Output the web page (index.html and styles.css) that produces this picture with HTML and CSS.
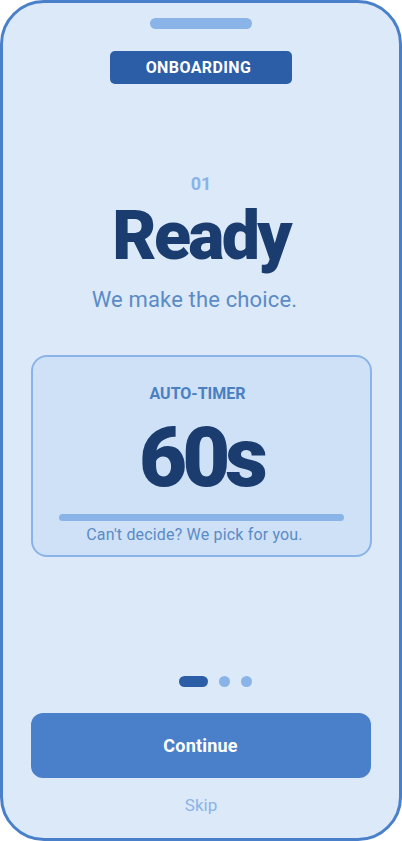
FILE: index.html
```
<!DOCTYPE html>
<html lang="en">

<head>
    <meta charset="UTF-8">
    <meta name="viewport" content="width=device-width, initial-scale=1.0">

    <title>Onboarding</title>
    <link rel="stylesheet" href="styles.css">
</head>

<body>
    <div class="phone">
        <div class="notch"></div>
        <div class="badge">ONBOARDING</div>

        <div class="step">01</div>
        <h1 class="title">Ready</h1>
        <p class="subtitle">We make the choice.</p>

        <div class="card">
            <div class="card-label">AUTO-TIMER</div>
            <div class="timer">60s</div>
            <div class="bar"></div>
            <div class="card-note">Can't decide? We pick for you.</div>
        </div>

        <div class="bottom">
            <div class="dots">
                <span class="dot active"></span>
                <span class="dot"></span>
                <span class="dot"></span>
            </div>
            <button class="btn">Continue</button>
            <div class="skip">Skip</div>
        </div>
    </div>
</body>

</html>
```

FILE: styles.css
```
* {
    box-sizing: border-box;
}

body {
    margin: 0;
    background: #ffffff;
    font-family: Roboto, "Liberation Sans", sans-serif;
}

.phone {
    width: 402px;
    height: 841px;
    border: 3px solid #4a7fc9;
    border-radius: 44px;
    background: #dce9f8;
    display: flex;
    flex-direction: column;
    align-items: center;
    padding-top: 15px;
    text-align: center;
}

.notch {
    width: 102px;
    height: 11px;
    border-radius: 6px;
    background: #8ab4e8;
}

.badge {
    margin-top: 22px;
    width: 182px;
    height: 33px;
    border-radius: 5px;
    background: #2c5ea8;
    color: #ffffff;
    font-size: 16px;
    font-weight: 700;
    letter-spacing: 0.4px;
    line-height: 33px;
    padding-right: 5px;
}

.step {
    margin-top: 90px;
    font-size: 18px;
    line-height: 20px;
    font-weight: 700;
    color: #8ab4e8;
}

.title {
    margin: 2px 0 0;
    font-size: 68px;
    line-height: 80px;
    font-weight: 900;
    letter-spacing: -0.04em;
    color: #1a3c6e;
}

.subtitle {
    margin: 11px 13px 0 0;
    font-size: 22px;
    line-height: 26px;
    letter-spacing: 0.15px;
    color: #5b8bc6;
}

.card {
    margin-top: 42px;
    width: 341px;
    height: 202px;
    border: 2px solid #8ab4e8;
    border-radius: 16px;
    background: #cfe1f6;
    display: flex;
    flex-direction: column;
    align-items: center;
    padding-top: 27px;
}

.card-label {
    margin-right: 7px;
    font-size: 16px;
    line-height: 20px;
    font-weight: 700;
    color: #4a7fc0;
}

.timer {
    margin-top: 6px;
    font-size: 83px;
    line-height: 96px;
    font-weight: 900;
    letter-spacing: -0.06em;
    color: #1a3c6e;
}

.bar {
    margin-top: 8px;
    width: 285px;
    height: 7px;
    border-radius: 4px;
    background: #8ab4e8;
}

.card-note {
    margin: 4px 13px 0 0;
    font-size: 16px;
    line-height: 20px;
    letter-spacing: 0.17px;
    color: #5b8bc6;
}

.bottom {
    margin-top: auto;
    padding-bottom: 22px;
    width: 100%;
    display: flex;
    flex-direction: column;
    align-items: center;
}

.dots {
    display: flex;
    gap: 11px;
    margin-left: 28px;
}

.dot {
    width: 11px;
    height: 11px;
    border-radius: 6px;
    background: #8ab4e8;
}

.dot.active {
    width: 29px;
    background: #2c5ea8;
}

.btn {
    margin-top: 26px;
    width: 340px;
    height: 65px;
    border: none;
    border-radius: 12px;
    background: #4a7fca;
    color: #ffffff;
    font-family: Roboto, "Liberation Sans", sans-serif;
    font-size: 18px;
    font-weight: 700;
    letter-spacing: 0.2px;
    padding-right: 7px;
}

.skip {
    margin-top: 16px;
    font-size: 17px;
    line-height: 22px;
    color: #8ab4e8;
}
```
